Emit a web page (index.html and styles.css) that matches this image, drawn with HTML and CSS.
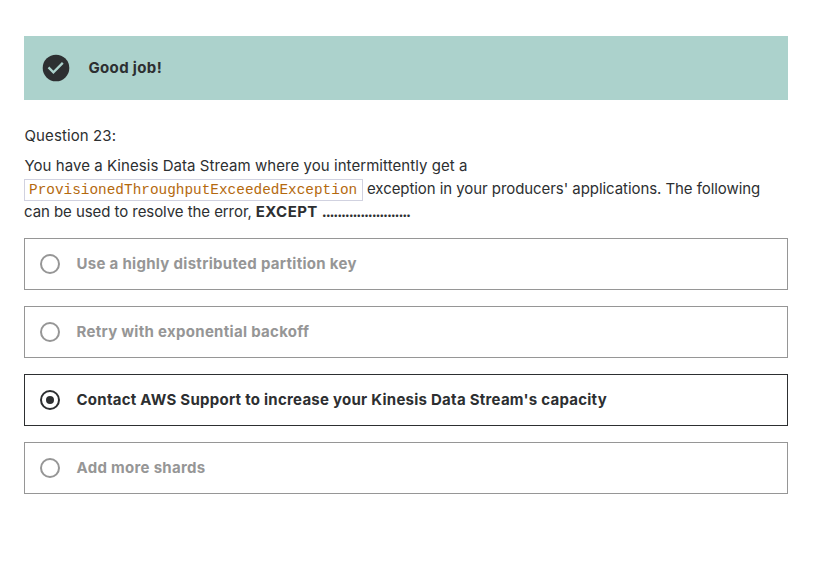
FILE: index.html
```html
<!DOCTYPE html>
<html lang="en">
<head>
<meta charset="utf-8">
<title>Question 23</title>
<link rel="stylesheet" href="styles.css">
</head>
<body>
<main class="quiz">
  <div class="alert">
    <svg class="alert-icon" viewBox="0 0 28 28"><circle cx="14" cy="14" r="13.3" fill="#2d2f31"/><path d="M6.5 13.4l4.9 4.9 9.4-9.4" fill="none" stroke="#acd2cc" stroke-width="2.3"/></svg>
    <span class="alert-title">Good job!</span>
  </div>
  <div class="number">Question 23:</div>
  <div class="prompt">
    <div class="line"><span class="intro">You have a Kinesis Data Stream where you intermittently get a</span></div>
    <div class="line"><code>ProvisionedThroughputExceededException</code><span class="tight">exception in your producers' applications. The following</span></div>
    <div class="line"><span class="tight">can be used to resolve the error,</span><strong class="except">EXCEPT</strong><strong class="dots">.......................</strong></div>
  </div>
  <ul class="answers">
    <li class="answer"><span class="radio"></span><span>Use a highly distributed partition key</span></li>
    <li class="answer"><span class="radio"></span><span>Retry with exponential backoff</span></li>
    <li class="answer selected"><span class="radio"></span><span>Contact AWS Support to increase your Kinesis Data Stream's capacity</span></li>
    <li class="answer"><span class="radio"></span><span>Add more shards</span></li>
  </ul>
</main>
</body>
</html>
```

FILE: styles.css
```css
* { box-sizing: border-box; }
body { margin: 0; background: #fff; color: #2d2f31; font: 15px/23px Inter, "Liberation Sans", sans-serif; }
.quiz { width: 764px; margin: 36px 0 0 24px; }
.alert { display: flex; align-items: center; height: 64px; padding-left: 18px; background: #acd2cc; font-weight: 700; letter-spacing: 0.36px; }
.alert-icon { width: 28px; height: 28px; margin-right: 18.4px; }
.alert-title { padding-bottom: 1px; }
.number { margin-top: 24px; padding-left: 0.5px; letter-spacing: 0.1px; }
.prompt { margin-top: 7px; }
.line { display: flex; align-items: center; height: 23px; white-space: nowrap; }
.intro { padding-left: 0.4px; letter-spacing: 0.06px; }
.tight { letter-spacing: -0.065px; }
code { position: relative; top: 1px; width: 339px; height: 22px; margin-right: 4px; padding: 0 4px; border: 1px solid #d1d2e0; color: #b4690e; font: 14.4px/20px "Liberation Mono", monospace; }
.except { margin: 0 4px; letter-spacing: 0.45px; }
.dots { letter-spacing: -1.18px; }
.answers { list-style: none; margin: 15px 0 0; padding: 0; display: flex; flex-direction: column; gap: 16px; }
.answer { display: flex; align-items: center; gap: 16.5px; height: 52px; padding: 0 0 0 15px; border: 1px solid #969696; color: #969696; font-weight: 700; letter-spacing: 0.3px; white-space: nowrap; }
.answer span:last-child { padding-bottom: 1px; }
.radio { display: grid; place-items: center; width: 20px; height: 20px; border: 2px solid currentColor; border-radius: 50%; }
.selected { color: #2d2f31; border-color: #2d2f31; letter-spacing: 0.26px; }
.selected .radio::after { content: ""; width: 8px; height: 8px; border-radius: 50%; background: currentColor; }
```
